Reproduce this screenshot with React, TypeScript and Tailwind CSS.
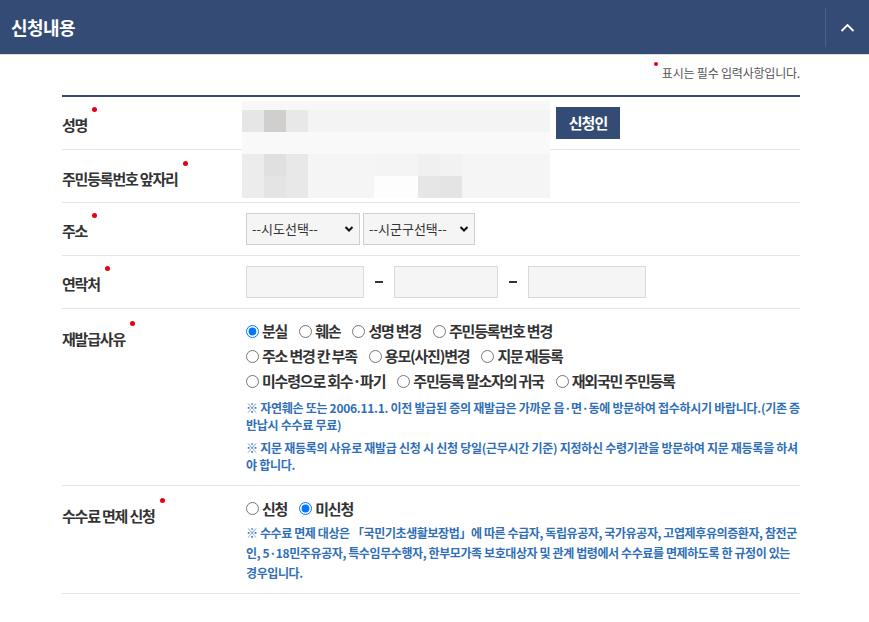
import React from "react";

const FONT = "font-['Noto_Sans_CJK_KR','Noto_Sans',sans-serif]";

// pixelated (mosaic) cells covering the name / id fields
const MOSAIC: { h: number; cells: [number, string][] }[] = [
  { h: 9, cells: [[308, "#f7f7f8"]] },
  { h: 22, cells: [[22, "#e6e6e6"], [22, "#d0cfcd"], [22, "#e8e8e8"], [242, "#f4f4f4"]] },
  { h: 22, cells: [[308, "#f9f9f9"]] },
  {
    h: 22,
    cells: [[22, "#ececec"], [22, "#e0e0e0"], [22, "#e8e8e8"], [66, "#f5f5f5"], [44, "#f5f4f4"], [22, "#f0f0f0"], [22, "#f2f2f2"], [88, "#f5f5f5"]],
  },
  {
    h: 22,
    cells: [[22, "#ececec"], [22, "#e4e4e4"], [22, "#e8e8e8"], [66, "#f5f5f5"], [44, "#fdfdfd"], [22, "#e6e6e6"], [22, "#e4e4e4"], [88, "#f5f5f5"]],
  },
];

function Label({ children }: { children: React.ReactNode }) {
  return (
    <span className="relative inline-block text-[15px] leading-[20px] font-bold text-[#333] tracking-[-1.2px]">
      {children}
      <span className="absolute -right-[10px] -top-[8px] w-[5px] h-[5px] rounded-full bg-[#e50012]" />
    </span>
  );
}

function Radio({ name, label, checked }: { name: string; label: string; checked?: boolean }) {
  return (
    <label className="inline-flex items-center mr-[12px] whitespace-nowrap">
      <input type="radio" name={name} defaultChecked={checked} className="m-0 mr-[3px] w-[13px] h-[13px]" />
      <span className="text-[15px] font-bold text-[#333] tracking-[-1.2px]">{label}</span>
    </label>
  );
}

function Select({ label, width }: { label: string; width: string }) {
  return (
    <div className={`relative ${width} h-[32px]`}>
      <select className="appearance-none w-full h-full bg-[#f5f5f5] border border-[#cfcfcf] pl-[5px] text-[13px] text-[#333] outline-none">
        <option>{label}</option>
      </select>
      <svg className="absolute right-[6px] top-[12px] pointer-events-none" width="10" height="8" viewBox="0 0 10 8">
        <path d="M1.5 2l3.5 3.5L8.5 2" fill="none" stroke="#111" strokeWidth="2" />
      </svg>
    </div>
  );
}

export default function App() {
  return (
    <div className={`w-[869px] min-h-[622px] bg-white ${FONT}`}>
      <header className="h-[55px] bg-[#344c75] border-b border-[#dcdcdc] flex items-center justify-between">
        <h2 className="pl-[11px] text-[18px] font-bold text-white tracking-[-0.6px]">신청내용</h2>
        <div className="flex items-center h-full">
          <div className="w-px h-[39px] bg-[#4b6088]" />
          <div className="w-[43px] flex justify-center">
            <svg width="15" height="9" viewBox="0 0 15 9">
              <path d="M1.5 8L7.5 2l6 6" fill="none" stroke="#fff" strokeWidth="1.8" />
            </svg>
          </div>
        </div>
      </header>

      <div className="mx-[62px] w-[738px]">
        <div className="h-[40px] flex justify-end pt-[11px]">
          <span className="relative text-[12px] leading-[14px] text-[#555] tracking-[-0.2px]">
            <span className="absolute -left-[8px] -top-[4px] w-[4px] h-[4px] rounded-full bg-[#e50012]" />
            표시는 필수 입력사항입니다.
          </span>
        </div>

        <div className="border-t-2 border-[#344c75]">
          <div className="relative">
            <div className="flex items-center h-[53px] border-b border-[#e6e6e6]">
              <div className="w-[184px] shrink-0 pt-[2px]">
                <Label>성명</Label>
              </div>
              <button className="ml-[310px] w-[64px] h-[32px] bg-[#344c75] text-white text-[15px] font-bold tracking-[-1px]">
                신청인
              </button>
            </div>
            <div className="flex items-center h-[53px] border-b border-[#e6e6e6]">
              <div className="w-[184px] shrink-0 pt-[4px]">
                <Label>주민등록번호 앞자리</Label>
              </div>
            </div>
            <div className="absolute left-[180px] top-[4px] w-[308px]">
              {MOSAIC.map((row, i) => (
                <div key={i} className="flex" style={{ height: row.h }}>
                  {row.cells.map(([w, c], j) => (
                    <div key={j} style={{ width: w, background: c }} />
                  ))}
                </div>
              ))}
            </div>
          </div>

          <div className="flex items-center h-[53px] border-b border-[#e6e6e6]">
            <div className="w-[184px] shrink-0 pt-[2px]">
              <Label>주소</Label>
            </div>
            <div className="flex gap-[3px]">
              <Select label="--시도선택--" width="w-[114px]" />
              <Select label="--시군구선택--" width="w-[112px]" />
            </div>
          </div>

          <div className="flex items-center h-[53px] border-b border-[#e6e6e6]">
            <div className="w-[184px] shrink-0 pt-[2px]">
              <Label>연락처</Label>
            </div>
            <div className="flex items-center">
              <input className="w-[118px] h-[32px] bg-[#f5f5f5] border border-[#d9d9d9]" />
              <span className="w-[30px] flex justify-center">
                <span className="w-[8px] h-[2px] bg-[#333]" />
              </span>
              <input className="w-[104px] h-[32px] bg-[#f5f5f5] border border-[#d9d9d9]" />
              <span className="w-[30px] flex justify-center">
                <span className="w-[8px] h-[2px] bg-[#333]" />
              </span>
              <input className="w-[118px] h-[32px] bg-[#f5f5f5] border border-[#d9d9d9]" />
            </div>
          </div>

          <div className="flex items-start border-b border-[#e6e6e6] pt-[10px] pb-[12px]">
            <div className="w-[184px] shrink-0 pt-[7px]">
              <Label>재발급사유</Label>
            </div>
            <div className="flex-1 min-w-0">
              <div className="leading-[24.5px]">
                <div>
                  <Radio name="reason" label="분실" checked />
                  <Radio name="reason" label="훼손" />
                  <Radio name="reason" label="성명 변경" />
                  <Radio name="reason" label="주민등록번호 변경" />
                </div>
                <div>
                  <Radio name="reason" label="주소 변경 칸 부족" />
                  <Radio name="reason" label="용모(사진)변경" />
                  <Radio name="reason" label="지문 재등록" />
                </div>
                <div>
                  <Radio name="reason" label="미수령으로 회수·파기" />
                  <Radio name="reason" label="주민등록 말소자의 귀국" />
                  <Radio name="reason" label="재외국민 주민등록" />
                </div>
              </div>
              <div className="mt-[6px] text-[12px] leading-[17px] font-bold text-[#2f6fb7] tracking-[-0.28px]">
                <p className="mb-[6px] whitespace-nowrap">
                  ※ 자연훼손 또는 2006.11.1. 이전 발급된 증의 재발급은 가까운 읍·면·동에 방문하여 접수하시기 바랍니다.(기존 증
                  <br />
                  반납시 수수료 무료)
                </p>
                <p className="whitespace-nowrap">
                  ※ 지문 재등록의 사유로 재발급 신청 시 신청 당일(근무시간 기준) 지정하신 수령기관을 방문하여 지문 재등록을 하셔
                  <br />
                  야 합니다.
                </p>
              </div>
            </div>
          </div>

          <div className="flex items-start border-b border-[#e6e6e6] pt-[10px] pb-[10px]">
            <div className="w-[184px] shrink-0 pt-[7px]">
              <Label>수수료 면제 신청</Label>
            </div>
            <div className="flex-1 min-w-0">
              <div className="leading-[24.5px]">
                <Radio name="fee" label="신청" />
                <Radio name="fee" label="미신청" checked />
              </div>
              <p className="mt-[2px] whitespace-nowrap text-[12px] leading-[20px] font-bold text-[#2f6fb7] tracking-[-0.4px]">
                ※ 수수료 면제 대상은 「국민기초생활보장법」에 따른 수급자, 독립유공자, 국가유공자, 고엽제후유의증환자, 참전군
                <br />
                인, 5·18민주유공자, 특수임무수행자, 한부모가족 보호대상자 및 관계 법령에서 수수료를 면제하도록 한 규정이 있는
                <br />
                경우입니다.
              </p>
            </div>
          </div>
        </div>
      </div>
    </div>
  );
}
